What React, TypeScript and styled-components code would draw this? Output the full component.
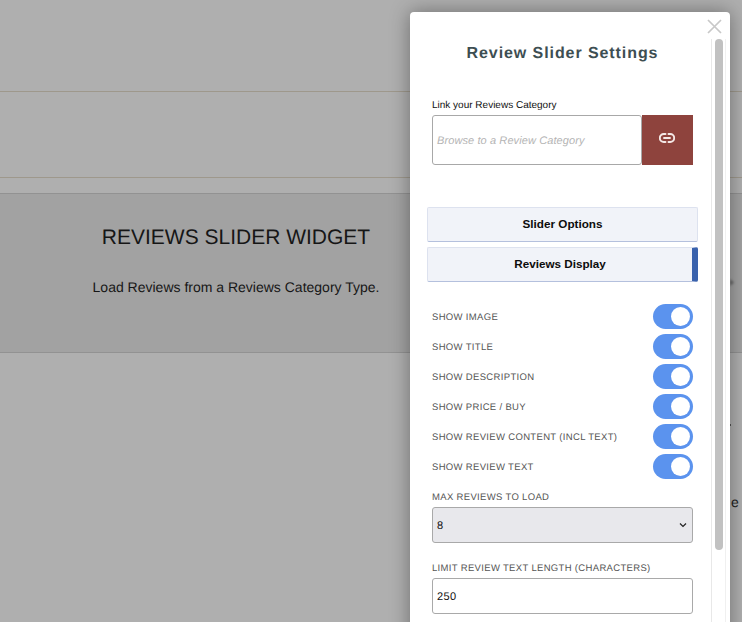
import React from "react";
import styled, { createGlobalStyle } from "styled-components";

const Global = createGlobalStyle`
  html, body { margin: 0; padding: 0; height: 100%; overflow: hidden; background: #afafaf; }
  * { box-sizing: border-box; }
  #root { height: 100%; }
`;

const Page = styled.div`
  width: 742px;
  height: 622px;
  position: relative;
  overflow: hidden;
  background: #afafaf;
  font-family: "Liberation Sans", Arial, sans-serif;
  text-rendering: geometricPrecision;
`;

const Rule = styled.div<{ $top: number }>`
  height: 1px;
  background: #9e988c;
  margin-top: ${(p) => p.$top}px;
`;

const WidgetBand = styled.section`
  margin-top: 15px;
  height: 160px;
  background: #a2a2a2;
  border-top: 1px solid #929292;
  border-bottom: 1px solid #929292;
  padding: 31px 0 0 92px;
  width: 100%;
  display: flex;
  flex-direction: column;
`;

const WidgetTitle = styled.h2`
  margin: 0;
  width: 288px;
  text-align: center;
  font-size: 21px;
  line-height: 26px;
  font-weight: 400;
  color: #161616;
`;

const WidgetText = styled.p`
  margin: 27px 0 0;
  width: 288px;
  text-align: center;
  font-size: 14px;
  line-height: 18px;
  white-space: nowrap;
  color: #161616;
`;

const StrayLetter = styled.span`
  position: absolute;
  left: 731px;
  top: 493px;
  font-size: 14px;
  line-height: 18px;
  color: #222;
`;

const StrayDot = styled.span`
  position: absolute;
  left: 730px;
  top: 424px;
  width: 1px;
  height: 2px;
  background: #555;
`;

const StrayArrow = styled.svg`
  position: absolute;
  left: 730px;
  top: 278px;
  filter: blur(0.8px);
`;

const Modal = styled.aside`
  position: absolute;
  left: 410px;
  top: 12px;
  width: 320px;
  height: 640px;
  background: #fff;
  border-radius: 4px;
  box-shadow: 0 0 20px rgba(0, 0, 0, 0.38);
  display: flex;
`;

const Close = styled.button`
  position: absolute;
  right: 8px;
  top: 7px;
  width: 15px;
  height: 15px;
  padding: 0;
  border: 0;
  background: none;
  display: block;
`;

const Body = styled.div`
  width: 301px;
  padding: 0 17px;
  display: flex;
  flex-direction: column;
`;

const Track = styled.div`
  width: 15px;
  margin-top: 27px;
  border-left: 1px solid #e8e8e8;
  border-right: 1px solid #f0f0f0;
  padding: 0 3px;
`;

const Thumb = styled.div`
  width: 8px;
  height: 511px;
  background: #c1c1c1;
  border-radius: 4px;
`;

const Heading = styled.h1`
  margin: 33px 0 0;
  padding-left: 4px;
  text-align: center;
  font-size: 16px;
  line-height: 18px;
  font-weight: 700;
  letter-spacing: 0.92px;
  color: #3d4e52;
`;

const LinkLabel = styled.label`
  display: block;
  margin: 36px 0 0 5px;
  font-size: 10px;
  line-height: 14px;
  color: #111;
`;

const LinkRow = styled.div`
  display: flex;
  margin: 2px 0 0 5px;
  height: 50px;
`;

const LinkInput = styled.div`
  width: 210px;
  border: 1px solid #a8a8a8;
  border-radius: 3px;
  padding: 2px 0 0 4px;
  font-size: 11px;
  font-style: italic;
  letter-spacing: 0.1px;
  color: #b4b4b4;
  display: flex;
  align-items: center;
`;

const LinkButton = styled.button`
  width: 51px;
  border: 0;
  padding: 0 1px 4px 0;
  background: #8e433d;
  display: flex;
  align-items: center;
  justify-content: center;
`;

const Accordion = styled.button<{ $first?: boolean; $active?: boolean }>`
  display: block;
  width: 271px;
  height: 35px;
  margin-top: ${(p) => (p.$first ? "42px" : "5px")};
  border: 1px solid #dde2ef;
  border-bottom-color: #b4c0dd;
  border-right: ${(p) => (p.$active ? "6px solid #3a62ad" : "1px solid #dde2ef")};
  border-radius: 2px;
  background: #f1f3f9;
  font-family: "Liberation Sans", Arial, sans-serif;
  font-size: 11.7px;
  font-weight: 700;
  color: #0c0c0c;
  padding: 0 0 3px;
`;

const Toggles = styled.div`
  margin: 22px 0 0 5px;
  width: 261px;
  display: flex;
  flex-direction: column;
  gap: 5px;
`;

const ToggleRow = styled.div`
  display: flex;
  align-items: center;
  justify-content: space-between;
  height: 25px;
`;

const FieldLabel = styled.span`
  padding-top: 2px;
  font-size: 9.5px;
  letter-spacing: 0.33px;
  color: #555;
  text-transform: uppercase;
`;

const Switch = styled.span`
  width: 40px;
  height: 25px;
  border-radius: 13px;
  background: #5b93ee;
  position: relative;
  display: block;
  &::after {
    content: "";
    position: absolute;
    top: 3px;
    right: 3px;
    width: 19px;
    height: 19px;
    border-radius: 50%;
    background: #fff;
  }
`;

const Field = styled.div<{ $top: number }>`
  margin: ${(p) => p.$top}px 0 0 5px;
  width: 261px;
  display: flex;
  flex-direction: column;
  gap: 2px;
`;

const FieldCaption = styled(FieldLabel)`
  display: block;
  padding-top: 1px;
  line-height: 14px;
`;

const SelectBox = styled.div`
  height: 36px;
  border: 1px solid #a9a9a9;
  border-radius: 3px;
  background: #e8e8ec;
  display: flex;
  align-items: center;
  justify-content: space-between;
  padding: 2px 5px 0 4px;
  font-size: 11px;
  letter-spacing: 0.4px;
  color: #111;
`;

const NumberBox = styled.div`
  height: 36px;
  border: 1px solid #a9a9a9;
  border-radius: 3px;
  background: #fff;
  display: flex;
  align-items: center;
  padding: 2px 4px 0;
  font-size: 11px;
  letter-spacing: 0.4px;
  color: #111;
`;

const Chevron = styled.svg`
  margin-top: -2px;
`;

const toggles = [
  "Show Image",
  "Show Title",
  "Show Description",
  "Show Price / Buy",
  "Show Review Content (incl text)",
  "Show Review Text",
];

export default function App() {
  return (
    <Page>
      <Global />
      <Rule $top={91} />
      <Rule $top={85} />
      <WidgetBand>
        <WidgetTitle>REVIEWS SLIDER WIDGET</WidgetTitle>
        <WidgetText>Load Reviews from a Reviews Category Type.</WidgetText>
      </WidgetBand>
      <StrayArrow width="6" height="9" viewBox="0 0 6 9">
        <path d="M0 1l4 3.5L0 8z" fill="#666" />
      </StrayArrow>
      <StrayDot />
      <StrayLetter>e</StrayLetter>
      <Modal>
        <Body>
          <Heading>Review Slider Settings</Heading>
          <LinkLabel>Link your Reviews Category</LinkLabel>
          <LinkRow>
            <LinkInput>Browse to a Review Category</LinkInput>
            <LinkButton aria-label="Link">
              <svg width="16" height="10" viewBox="0 0 16 10" fill="none" stroke="#f4e9e7" strokeWidth="1.9" strokeLinecap="round">
                <path d="M6.5 1H4.8a4 4 0 0 0 0 8h1.7" />
                <path d="M9.5 1h1.7a4 4 0 0 1 0 8H9.5" />
                <path d="M5 5h6" />
              </svg>
            </LinkButton>
          </LinkRow>
          <Accordion $first>Slider Options</Accordion>
          <Accordion $active>Reviews Display</Accordion>
          <Toggles>
            {toggles.map((t) => (
              <ToggleRow key={t}>
                <FieldLabel>{t}</FieldLabel>
                <Switch />
              </ToggleRow>
            ))}
          </Toggles>
          <Field $top={11}>
            <FieldCaption>Max Reviews to Load</FieldCaption>
            <SelectBox>
              8
              <Chevron width="8" height="6" viewBox="0 0 8 6" fill="none" stroke="#222" strokeWidth="1.2">
                <path d="M1 1.5l3 3 3-3" />
              </Chevron>
            </SelectBox>
          </Field>
          <Field $top={18}>
            <FieldCaption>Limit Review Text Length (Characters)</FieldCaption>
            <NumberBox>250</NumberBox>
          </Field>
        </Body>
        <Track>
          <Thumb />
        </Track>
        <Close aria-label="Close">
          <svg width="15" height="15" viewBox="0 0 15 15" stroke="#c8c8c8" strokeWidth="1.7">
            <path d="M1 1l13 13M14 1L1 14" />
          </svg>
        </Close>
      </Modal>
    </Page>
  );
}
